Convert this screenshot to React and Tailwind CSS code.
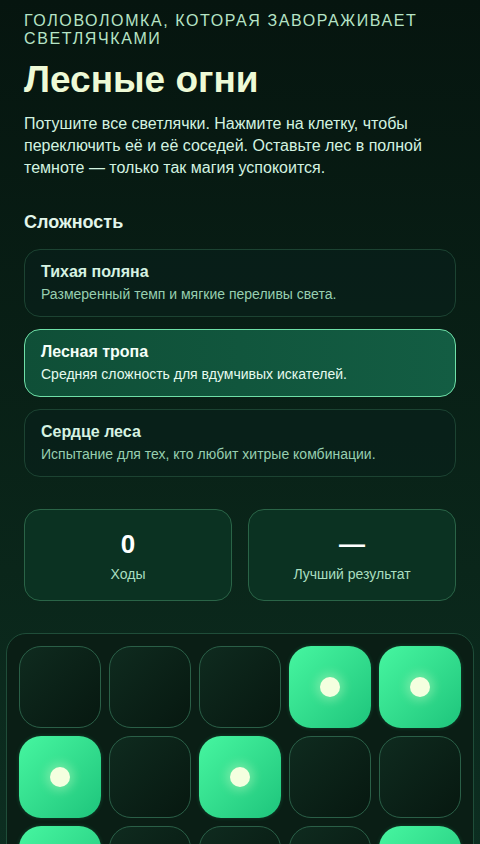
import { useState } from "react";

const levels = [
  { id: "calm", title: "Тихая поляна", description: "Размеренный темп и мягкие переливы света." },
  { id: "path", title: "Лесная тропа", description: "Средняя сложность для вдумчивых искателей." },
  { id: "heart", title: "Сердце леса", description: "Испытание для тех, кто любит хитрые комбинации." },
];

const initialBoard = [
  0, 0, 0, 1, 1,
  1, 0, 1, 0, 0,
  1, 0, 0, 0, 1,
  0, 1, 0, 1, 0,
  1, 0, 1, 0, 0,
];

const SIZE = 5;

const App = () => {
  const [level, setLevel] = useState("path");
  const [board, setBoard] = useState(initialBoard);
  const [moves, setMoves] = useState(0);

  const toggle = (index) => {
    const row = Math.floor(index / SIZE);
    const col = index % SIZE;
    const next = [...board];
    const flip = (r, c) => {
      if (r < 0 || r >= SIZE || c < 0 || c >= SIZE) return;
      next[r * SIZE + c] = next[r * SIZE + c] ? 0 : 1;
    };
    flip(row, col);
    flip(row - 1, col);
    flip(row + 1, col);
    flip(row, col - 1);
    flip(row, col + 1);
    setBoard(next);
    setMoves(moves + 1);
  };

  return (
    <div
      className="min-h-screen bg-gradient-to-b from-[#06150f] via-[#0a261a] to-[#0f3628] text-white"
      style={{ fontFamily: '"Liberation Sans", Arial, sans-serif' }}
    >
      <main className="px-6 pt-3 pb-10">
        <p className="text-[16px] leading-[18px] tracking-[0.1em] uppercase text-[#b6e4c6]">
          Головоломка, которая завораживает светлячками
        </p>
        <h1 className="mt-3 text-[37px] leading-10 font-bold text-[#eefad6]">
          Лесные огни
        </h1>
        <p className="mt-[13px] text-[16px] leading-[22px] text-[#d3f3e0]">
          Потушите все светлячки. Нажмите на клетку, чтобы переключить её и её
          соседей. Оставьте лес в полной темноте — только так магия успокоится.
        </p>

        <h2 className="mt-[31px] text-[18px] leading-6 font-bold text-[#e2f5ea]">
          Сложность
        </h2>
        <div className="mt-[15px] flex flex-col gap-3">
          {levels.map((item) => {
            const active = item.id === level;
            return (
              <button
                key={item.id}
                onClick={() => setLevel(item.id)}
                className={`text-left rounded-2xl border px-4 py-3 ${
                  active
                    ? "border-[#6fe0a8] bg-gradient-to-r from-[#0f4f37] to-[#135d43]"
                    : "border-[#1c4332] bg-[#08201a]/60"
                }`}
              >
                <div
                  className={`text-[16px] leading-5 font-bold ${
                    active ? "text-[#f4fff8]" : "text-[#d6f3e2]"
                  }`}
                >
                  {item.title}
                </div>
                <div
                  className={`mt-0.5 text-[14px] leading-5 ${
                    active ? "text-[#e6fbef]" : "text-[#97cfb0]"
                  }`}
                >
                  {item.description}
                </div>
              </button>
            );
          })}
        </div>

        <div className="mt-8 grid grid-cols-2 gap-4">
          <div className="rounded-2xl border border-[#2a6447] bg-[#0b3222] pt-[18px] pb-4 text-center">
            <div className="text-[26px] leading-8 font-bold text-white">{moves}</div>
            <div className="mt-1 text-[14px] leading-5 text-[#a9dfc0]">Ходы</div>
          </div>
          <div className="rounded-2xl border border-[#2a6447] bg-[#0b3222] pt-[18px] pb-4 text-center">
            <div className="text-[26px] leading-8 font-bold text-white">—</div>
            <div className="mt-1 text-[14px] leading-5 text-[#a9dfc0]">Лучший результат</div>
          </div>
        </div>

        <div className="mt-8 -mx-[18px] rounded-[20px] border border-[#1f4d39] bg-[#0a1e15] p-3">
          <div className="grid grid-cols-5 gap-2">
            {board.map((on, i) => (
              <button
                key={i}
                onClick={() => toggle(i)}
                className={`h-[82px] rounded-[22px] flex items-center justify-center ${
                  on
                    ? "bg-gradient-to-br from-[#46f6a0] to-[#1dc57c] shadow-[0_0_4px_rgba(52,230,145,0.2)]"
                    : "border border-[#2a5f47] bg-gradient-to-br from-[#0f2b1f] to-[#071810]"
                }`}
              >
                {on ? (
                  <span className="w-5 h-5 rounded-full bg-[#f4ffdf] shadow-[0_0_10px_4px_rgba(240,255,210,0.3)]" />
                ) : null}
              </button>
            ))}
          </div>
        </div>
      </main>
    </div>
  );
};

export default App;
